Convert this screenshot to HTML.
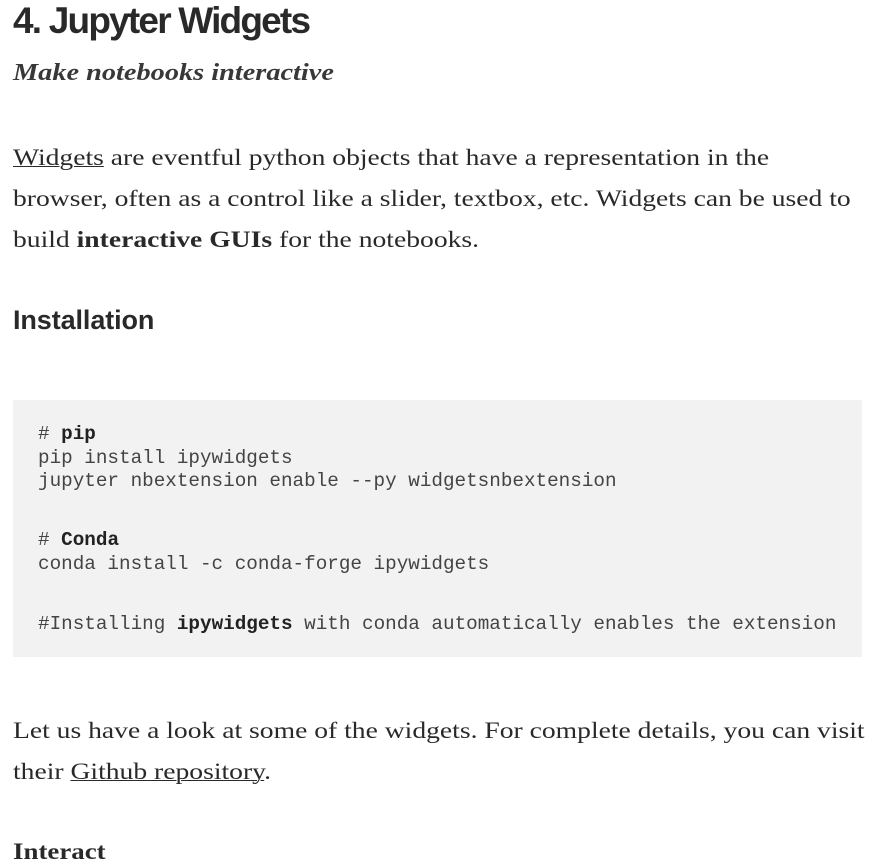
<!DOCTYPE html>
<html><head><meta charset="utf-8"><style>
body{margin:0;width:872px;height:865px;background:#fff;overflow:hidden;color:rgba(0,0,0,.84);position:relative}
.a{position:absolute;left:13px;white-space:nowrap;transform-origin:0 0}
h1{margin:0;font:bold 37px/1 "Liberation Sans",sans-serif;letter-spacing:-1.8px;top:2px}
.sub{font:italic bold 24px/1 "Liberation Serif",serif;top:61px;color:rgba(0,0,0,.78);transform:scaleX(1.18)}
.p{font:23px/41px "Liberation Serif",serif;transform:scaleX(1.2)}
.p u{text-decoration:underline;text-decoration-thickness:1px}
h2{margin:0;font:bold 27px/1 "Liberation Sans",sans-serif;letter-spacing:-.1px;top:307px}
pre{position:absolute;left:13px;top:400px;width:849px;height:257px;margin:0;background:#f2f2f2;box-sizing:border-box;padding:23px 0 0 25px;font:19.3px/23.5px "Liberation Mono",monospace;color:#444}
pre b{color:#222}
</style></head><body>
<h1 class="a">4. Jupyter Widgets</h1>
<div class="a sub">Make notebooks interactive</div>
<div class="a p" style="top:137px"><u>Widgets</u> are eventful python objects that have a representation in the<br>browser, often as a control like a slider, textbox, etc. Widgets can be used to<br>build <b>interactive GUIs</b> for the notebooks.</div>
<h2 class="a">Installation</h2>
<pre># <b>pip</b>
pip install ipywidgets
jupyter nbextension enable --py widgetsnbextension

<span style="display:block;height:12px"></span># <b>Conda</b>
conda install -c conda-forge ipywidgets

<span style="display:block;height:13px"></span>#Installing <b>ipywidgets</b> with conda automatically enables the extension</pre>
<div class="a p" style="top:710px">Let us have a look at some of the widgets. For complete details, you can visit<br>their <u>Github repository</u>.</div>
<div class="a" style="top:840px;font:bold 23px/1 'Liberation Serif',serif;transform:scaleX(1.17)">Interact</div>
</body></html>
